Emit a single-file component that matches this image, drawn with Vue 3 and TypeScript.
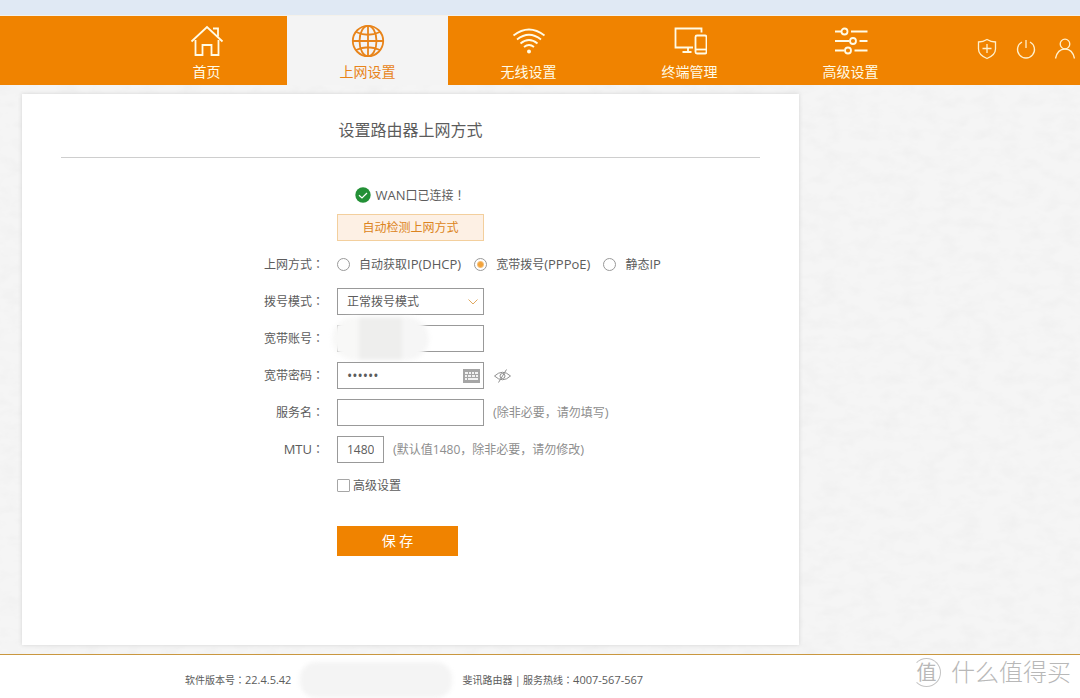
<script setup lang="ts">
import { ref } from 'vue'

type IconName = 'home' | 'globe' | 'wifi' | 'devices' | 'sliders'

interface NavItem {
  id: IconName
  label: string
}

const navItems: NavItem[] = [
  { id: 'home', label: '首页' },
  { id: 'globe', label: '上网设置' },
  { id: 'wifi', label: '无线设置' },
  { id: 'devices', label: '终端管理' },
  { id: 'sliders', label: '高级设置' },
]

const wanModes = [
  { value: 'dhcp', text: '自动获取', latin: 'IP(DHCP)' },
  { value: 'pppoe', text: '宽带拨号', latin: '(PPPoE)' },
  { value: 'static', text: '静态', latin: 'IP' },
]

const active = ref<IconName>('globe')
const wanMode = ref('pppoe')
const dialMode = ref('normal')
const account = ref('')
const password = ref('123456')
const showPassword = ref(false)
const serviceName = ref('')
const mtu = ref('1480')
const advanced = ref(false)
</script>

<template>
  <div class="page">
    <div class="strip"></div>
    <header class="topbar">
      <nav class="nav">
        <a
          v-for="item in navItems"
          :key="item.id"
          href="#"
          class="nav-item"
          :class="{ active: item.id === active }"
          @click.prevent="active = item.id"
        >
          <svg v-if="item.id === 'home'" class="nav-icon" viewBox="0 0 34 34">
            <path d="M1.500 17.500 17 3l15.500 14.500" />
            <path d="M5.500 16v15h7v-10h9v10h7V16" />
            <path d="M23 4.500h5v8" />
          </svg>
          <svg v-else-if="item.id === 'globe'" class="nav-icon" viewBox="0 0 34 34">
            <circle cx="17" cy="17" r="15.200" />
            <ellipse cx="17" cy="17" rx="8.500" ry="15.200" />
            <path d="M17 1.800v30.400M1.800 17h30.400M5 8q12 5.500 24 0M5 26q12-5.500 24 0" />
          </svg>
          <svg v-else-if="item.id === 'wifi'" class="nav-icon" viewBox="0 0 34 34">
            <path d="M1.500 11.500q15.500-12 31 0M5 15.500q12-9.500 24 0M8.500 19.500q8.500-7 17 0M12 23q5-4 10 0" />
            <circle class="solid" cx="17" cy="27.500" r="2" />
          </svg>
          <svg v-else-if="item.id === 'devices'" class="nav-icon" viewBox="0 0 34 34">
            <path d="M20 23.500H2.500V4.500h26v4" />
            <path d="M15 24v4M9.500 28h9" />
            <rect x="22.500" y="11.500" width="11" height="18" rx="1.500" />
            <path d="M22.500 25.500h11" />
          </svg>
          <svg v-else class="nav-icon" viewBox="0 0 34 34">
            <path d="M1 7.500h6.500M17 7.500h16.500M1 17h14.500M25.500 17h8M1 26.500h9.500M20.500 26.500h13" />
            <circle cx="10.500" cy="7.500" r="3" />
            <circle cx="19" cy="17" r="3" />
            <circle cx="14" cy="26.500" r="3" />
          </svg>
          <span>{{ item.label }}</span>
        </a>
      </nav>
      <div class="tools">
        <button type="button" class="tool" aria-label="安全">
          <svg viewBox="0 0 22 22">
            <path d="M11 1.500q-4 2.500-8.500 2.500v7q0 6 8.500 9.500 8.500-3.500 8.500-9.500V4q-4.500 0-8.500-2.500z" />
            <path d="M11 6v9M6.500 10.500h9" />
          </svg>
        </button>
        <button type="button" class="tool" aria-label="重启">
          <svg viewBox="0 0 22 22">
            <path d="M7 4a8.500 8.500 0 1 0 8 0M11 2v8" />
          </svg>
        </button>
        <button type="button" class="tool" aria-label="账户">
          <svg viewBox="0 0 22 22">
            <circle cx="11" cy="6" r="4.800" />
            <path d="M1.500 20.500q2-9.500 9.500-9.500t9.500 9.500" />
          </svg>
        </button>
      </div>
    </header>

    <main class="main">
      <svg class="texture" aria-hidden="true">
        <filter id="paper">
          <feTurbulence type="fractalNoise" baseFrequency="0.05 0.09" numOctaves="3" seed="4" />
          <feColorMatrix values="0 0 0 0 .5  0 0 0 0 .5  0 0 0 0 .5  .16 0 0 0 -.065" />
        </filter>
        <rect width="100%" height="100%" filter="url(#paper)" />
      </svg>
      <section class="panel">
        <h1 class="title">设置路由器上网方式</h1>
        <form class="form" @submit.prevent>
          <div class="row status-row">
            <span class="status">
              <svg class="ok" viewBox="0 0 16 16">
                <circle cx="8" cy="8" r="7.700" />
                <path d="M4 8.200l3 2.800 5-5" />
              </svg>
              <span><span class="latin">WAN</span>口已连接<span class="mark">！</span></span>
            </span>
          </div>
          <div class="row">
            <button type="button" class="detect">自动检测上网方式</button>
          </div>
          <div class="row" role="radiogroup" aria-labelledby="mode-label">
            <span id="mode-label" class="label">上网方式<span class="mark">：</span></span>
            <div class="radios">
              <label v-for="m in wanModes" :key="m.value" class="radio">
                <input v-model="wanMode" type="radio" name="wan" :value="m.value" />
                <span>{{ m.text }}<span class="latin">{{ m.latin }}</span></span>
              </label>
            </div>
          </div>
          <div class="row">
            <label class="label" for="dial">拨号模式<span class="mark">：</span></label>
            <div class="field">
              <select id="dial" v-model="dialMode" class="control">
                <option value="normal">正常拨号模式</option>
              </select>
              <svg class="chevron" viewBox="0 0 10 6"><path d="M.5.5 5 5 9.500.5" /></svg>
            </div>
          </div>
          <div class="row">
            <label class="label" for="account">宽带账号<span class="mark">：</span></label>
            <div class="field">
              <input id="account" v-model="account" type="text" class="control" />
              <span class="smudge"></span>
            </div>
          </div>
          <div class="row">
            <label class="label" for="pwd">宽带密码<span class="mark">：</span></label>
            <div class="field">
              <input id="pwd" v-model="password" :type="showPassword ? 'text' : 'password'" class="control secret" />
              <svg class="keyboard" viewBox="0 0 17 14">
                <rect x="0" y="0" width="17" height="14" fill="#a6a6a6" />
                <path d="M2 3h3v2H2zM6 3h2v2H6zM9 3h2v2H9zM12 3h3v2h-3zM2 6h2v2H2zM5 6h3v2H5zM9 6h3v2H9zM13 6h2v2h-2zM2 9h2v2H2zM5 9h10v2H5z" fill="#f2f2f2" />
              </svg>
            </div>
            <button type="button" class="eye" aria-label="显示密码" @click="showPassword = !showPassword">
              <svg viewBox="0 0 17 14">
                <path d="M.5 7Q8.500-.5 16.500 7 8.500 14.500.5 7z" />
                <circle cx="8.500" cy="7" r="2.500" />
                <path d="M12.500.5l-8 13" />
              </svg>
            </button>
          </div>
          <div class="row">
            <label class="label" for="service">服务名<span class="mark">：</span></label>
            <div class="field">
              <input id="service" v-model="serviceName" type="text" class="control" />
            </div>
            <span class="hint"><span class="latin">(</span>除非必要，请勿填写<span class="latin">)</span></span>
          </div>
          <div class="row">
            <label class="label" for="mtu"><span class="latin">MTU</span><span class="mark">：</span></label>
            <div class="field short">
              <input id="mtu" v-model="mtu" type="text" class="control" />
            </div>
            <span class="hint"><span class="latin">(</span>默认值1480，除非必要，请勿修改<span class="latin">)</span></span>
          </div>
          <div class="row check-row">
            <label class="check">
              <input v-model="advanced" type="checkbox" />
              <span>高级设置</span>
            </label>
          </div>
          <div class="row save-row">
            <button type="submit" class="save">保 存</button>
          </div>
        </form>
      </section>
    </main>

    <footer class="footer">
      <span>软件版本号<span class="mark">：</span><span class="num">22.4.5.42</span></span>
      <span class="blot"></span>
      <span>斐讯路由器 | 服务热线<span class="mark">：</span><span class="num">4007-567-567</span></span>
      <span class="brand">
        <span class="seal">值</span>
        <span>什么值得买</span>
      </span>
    </footer>
  </div>
</template>

<style>
html,
body {
  margin: 0;
  background: #fff;
}
</style>

<style scoped>
.page {
  display: flex;
  flex-direction: column;
  min-height: 100vh;
  font: 12px/18px 'Open Sans', 'Noto Sans CJK SC', sans-serif;
  color: #5c5c5c;
  background: #f5f5f5;
}
.page *,
.page {
  box-sizing: border-box;
}
button,
input,
select {
  margin: 0;
  padding: 0;
  border: 0;
  background: none;
  font: inherit;
  color: inherit;
  border-radius: 0;
}
svg {
  display: block;
  fill: none;
  stroke: currentColor;
}
.latin {
  font-size: 13px;
}
.mark {
  font-family: 'Noto Sans CJK TC', sans-serif;
}
.strip {
  height: 16px;
  background: #e0e9f4;
  border-bottom: 1px solid #f4f1ea;
}
.topbar {
  display: flex;
  justify-content: space-between;
  height: 69px;
  padding-left: 126px;
  background: #f08300;
  color: #fff;
}
.nav {
  display: flex;
}
.nav-item {
  display: flex;
  flex-direction: column;
  align-items: center;
  gap: 4px;
  width: 161px;
  padding-top: 8px;
  font-size: 14px;
  line-height: 20px;
  color: #fffbe6;
  text-decoration: none;
}
.nav-item.active {
  background: #f4f4f4;
  color: #e8841a;
}
.nav-icon {
  width: 34px;
  height: 34px;
  stroke-width: 1.800;
}
.solid {
  fill: currentColor;
  stroke: none;
}
.tools {
  display: flex;
  align-items: center;
  gap: 17px;
  padding: 0 4px 4px 0;
}
.tool {
  width: 22px;
  height: 22px;
  color: #fff0cc;
}
.tool svg {
  stroke-width: 1.300;
}
.main {
  position: relative;
  flex: 1;
  padding: 9px 22px;
}
.texture {
  position: absolute;
  inset: 0;
  width: 100%;
  height: 100%;
}
.panel {
  position: relative;
  width: 75%;
  padding: 0 39px 89px;
  background: #fff;
  box-shadow: 0 0 4px #d4d4d4;
}
.title {
  margin: 0;
  padding: 24px 0 15px;
  border-bottom: 1px solid #cecece;
  font-size: 16px;
  font-weight: 400;
  line-height: 24px;
  text-align: center;
}
.form {
  display: flex;
  flex-direction: column;
  gap: 10px;
  padding-top: 28px;
}
.row {
  position: relative;
  display: flex;
  align-items: center;
  height: 27px;
  padding-left: 276px;
}
.label {
  width: 263px;
  margin: 0 13px 0 -276px;
  text-align: right;
}
.status-row {
  height: 18px;
}
.status {
  display: flex;
  align-items: center;
  justify-content: center;
  gap: 4px;
  width: 147px;
}
.ok {
  width: 16px;
  height: 16px;
  stroke: none;
}
.ok circle {
  fill: #239036;
}
.ok path {
  stroke: #fff;
  stroke-width: 1.200;
}
.detect {
  width: 147px;
  height: 27px;
  border: 1px solid #f3cf9d;
  background: #fdf0e4;
  color: #dc8420;
}
.radios {
  display: flex;
  gap: 13px;
}
.radio {
  display: flex;
  align-items: center;
  gap: 9px;
}
.radio input {
  appearance: none;
  width: 13px;
  height: 13px;
  border: 1px solid #999;
  border-radius: 50%;
}
.radio input:checked {
  background: radial-gradient(circle, #f2a33c 2px, #f7c078 3px, #fff 4px);
}
.field {
  position: relative;
  width: 147px;
}
.field.short {
  width: 47px;
}
.control {
  display: block;
  appearance: none;
  width: 100%;
  height: 27px;
  padding: 0 9px;
  border: 1px solid #999;
  background: #fff;
  outline: none;
}
.secret {
  font-size: 14px;
}
.chevron {
  position: absolute;
  right: 6px;
  top: 11px;
  width: 10px;
  height: 6px;
  color: #e0a860;
  pointer-events: none;
}
.keyboard {
  position: absolute;
  right: 4px;
  top: 7px;
  width: 17px;
  height: 14px;
  stroke: none;
}
.smudge {
  position: absolute;
  left: -5px;
  top: -8px;
  width: 97px;
  height: 43px;
  border-radius: 24px;
  background: linear-gradient(90deg, #f8f8f7 27px, #eeeeed 27px 70px, #f6f6f6 70px);
  filter: blur(2px);
}
.eye {
  width: 17px;
  height: 14px;
  margin-left: 10px;
  color: #8f8f8f;
}
.hint {
  margin-left: 9px;
  color: #8e8e8e;
}
.check-row {
  height: 25px;
}
.check {
  display: flex;
  align-items: center;
  gap: 3px;
}
.check input {
  appearance: none;
  width: 13px;
  height: 13px;
  border: 1px solid #a6a6a6;
  border-radius: 1px;
}
.check input:checked {
  background: #f08300;
}
.save-row {
  height: 30px;
  margin-top: 18px;
}
.save {
  width: 121px;
  height: 30px;
  background: #f08300;
  color: #fff;
  font-size: 14px;
}
.footer {
  position: relative;
  display: flex;
  align-items: center;
  height: 44px;
  padding: 7px 9px 0 185px;
  border-top: 1px solid #c9973f;
  background: #fff;
  font-size: 10px;
  white-space: nowrap;
}
.num {
  font-size: 11px;
}
.blot {
  width: 152px;
  height: 36px;
  margin: 0 10px 0 9px;
  border-radius: 16px;
  background: #f4f4f4;
  filter: blur(2px);
}
.brand {
  display: flex;
  align-items: center;
  gap: 10px;
  margin: 0 0 16px auto;
  font-size: 24px;
  font-weight: 300;
  line-height: 30px;
  color: #b8b8b8;
}
.seal {
  width: 29px;
  height: 29px;
  border: 1px solid #c4c4c4;
  border-left-color: transparent;
  border-radius: 50%;
  font-size: 20px;
  font-weight: 400;
  line-height: 27px;
  text-align: center;
}
</style>
